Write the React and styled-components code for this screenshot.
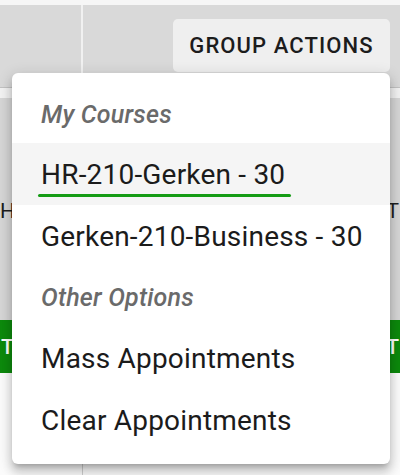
import React from "react";
import styled, { createGlobalStyle } from "styled-components";

const GlobalStyle = createGlobalStyle`
  html, body {
    margin: 0;
    padding: 0;
    background: #fafafa;
    font-family: Roboto, "Liberation Sans", sans-serif;
  }
`;

const Page = styled.div`
  position: relative;
  width: 400px;
  height: 475px;
  overflow: hidden;
  display: flex;
  flex-direction: column;
  background: #fafafa;
`;

const TopGap = styled.div`
  height: 5px;
  background: #f6f6f6;
`;

const Toolbar = styled.div`
  display: grid;
  grid-template-columns: 83px 1fr;
  height: 82px;
  background: #d9d9d9;
  border-bottom: 1px solid #c2c2c2;
`;

const ToolCell = styled.div`
  border-right: 2px solid #f1f1f1;
`;

const ToolActions = styled.div`
  display: flex;
  justify-content: flex-end;
  align-items: flex-start;
  padding: 14px 10px 0 0;
`;

const GroupButton = styled.button`
  height: 53px;
  width: 217px;
  padding: 0;
  border: none;
  border-radius: 5px;
  background: #efefef;
  color: #1c1c1c;
  font-family: Roboto, "Liberation Sans", sans-serif;
  font-size: 22px;
  font-weight: 500;
  letter-spacing: 1.1px;
  text-transform: uppercase;
`;

const Divider = styled.div`
  height: 10px;
  background: #f2f2f2;
`;

const TableBody = styled.div`
  display: flex;
  flex-direction: column;
  background: #d6d6d6;
`;

const Row = styled.div`
  height: ${(p) => p.$h}px;
  display: flex;
  justify-content: space-between;
  align-items: center;
  background: ${(p) => (p.$green ? "#0d8a0d" : "transparent")};
  color: ${(p) => (p.$green ? "#ffffff" : "#1e1e1e")};
  font-size: 21px;
  font-weight: ${(p) => (p.$green ? 500 : 400)};
  padding: 0 1px 0 0;
`;

const Footer = styled.div`
  flex: 1;
  display: grid;
  grid-template-columns: 83px 1fr;
  background: #fbfbfb;
`;

const FooterCol = styled.div`
  border-right: 1px solid #cfcfcf;
`;

const Menu = styled.ul`
  position: absolute;
  top: 73px;
  left: 12px;
  width: 378px;
  margin: 0;
  padding: 12px 0 13px;
  list-style: none;
  background: #ffffff;
  border-radius: 6px;
  box-shadow: 0 5px 5px -3px rgba(0, 0, 0, 0.2), 0 8px 10px 1px rgba(0, 0, 0, 0.14),
    0 3px 14px 2px rgba(0, 0, 0, 0.12);
`;

const GroupLabel = styled.li`
  height: ${(p) => p.$h}px;
  display: flex;
  align-items: center;
  padding-left: 29px;
  font-size: 25px;
  font-style: italic;
  font-weight: 500;
  letter-spacing: 0.2px;
  color: #6a6a6a;
`;

const MenuItem = styled.li`
  height: 62px;
  display: flex;
  align-items: center;
  padding-left: 29px;
  font-size: 28px;
  letter-spacing: 0.2px;
  color: #1b1b1b;
  background: ${(p) => (p.$active ? "#f5f5f5" : "transparent")};
`;

const Marked = styled.span`
  position: relative;
  &::after {
    content: "";
    position: absolute;
    left: -3px;
    right: -6px;
    bottom: -6px;
    height: 3px;
    border-radius: 2px;
    background: #159c15;
  }
`;

const courses = ["HR-210-Gerken - 30", "Gerken-210-Business - 30"];
const options = ["Mass Appointments", "Clear Appointments"];

export default function App() {
  const selected = courses[0];

  return (
    <>
      <GlobalStyle />
      <Page>
        <TopGap />
        <Toolbar>
          <ToolCell />
          <ToolActions>
            <GroupButton>Group Actions</GroupButton>
          </ToolActions>
        </Toolbar>
        <Divider />
        <TableBody>
          <Row $h={88} />
          <Row $h={50}>
            <span>H</span>
            <span>T</span>
          </Row>
          <Row $h={84} />
          <Row $h={53} $green>
            <span style={{ paddingLeft: 1 }}>T</span>
            <span>NT</span>
          </Row>
        </TableBody>
        <Footer>
          <FooterCol />
          <div />
        </Footer>

        <Menu>
          <GroupLabel $h={58}>My Courses</GroupLabel>
          {courses.map((c) => (
            <MenuItem key={c} $active={c === selected}>
              {c === selected ? <Marked>{c}</Marked> : c}
            </MenuItem>
          ))}
          <GroupLabel $h={60}>Other Options</GroupLabel>
          {options.map((o) => (
            <MenuItem key={o}>{o}</MenuItem>
          ))}
        </Menu>
      </Page>
    </>
  );
}
